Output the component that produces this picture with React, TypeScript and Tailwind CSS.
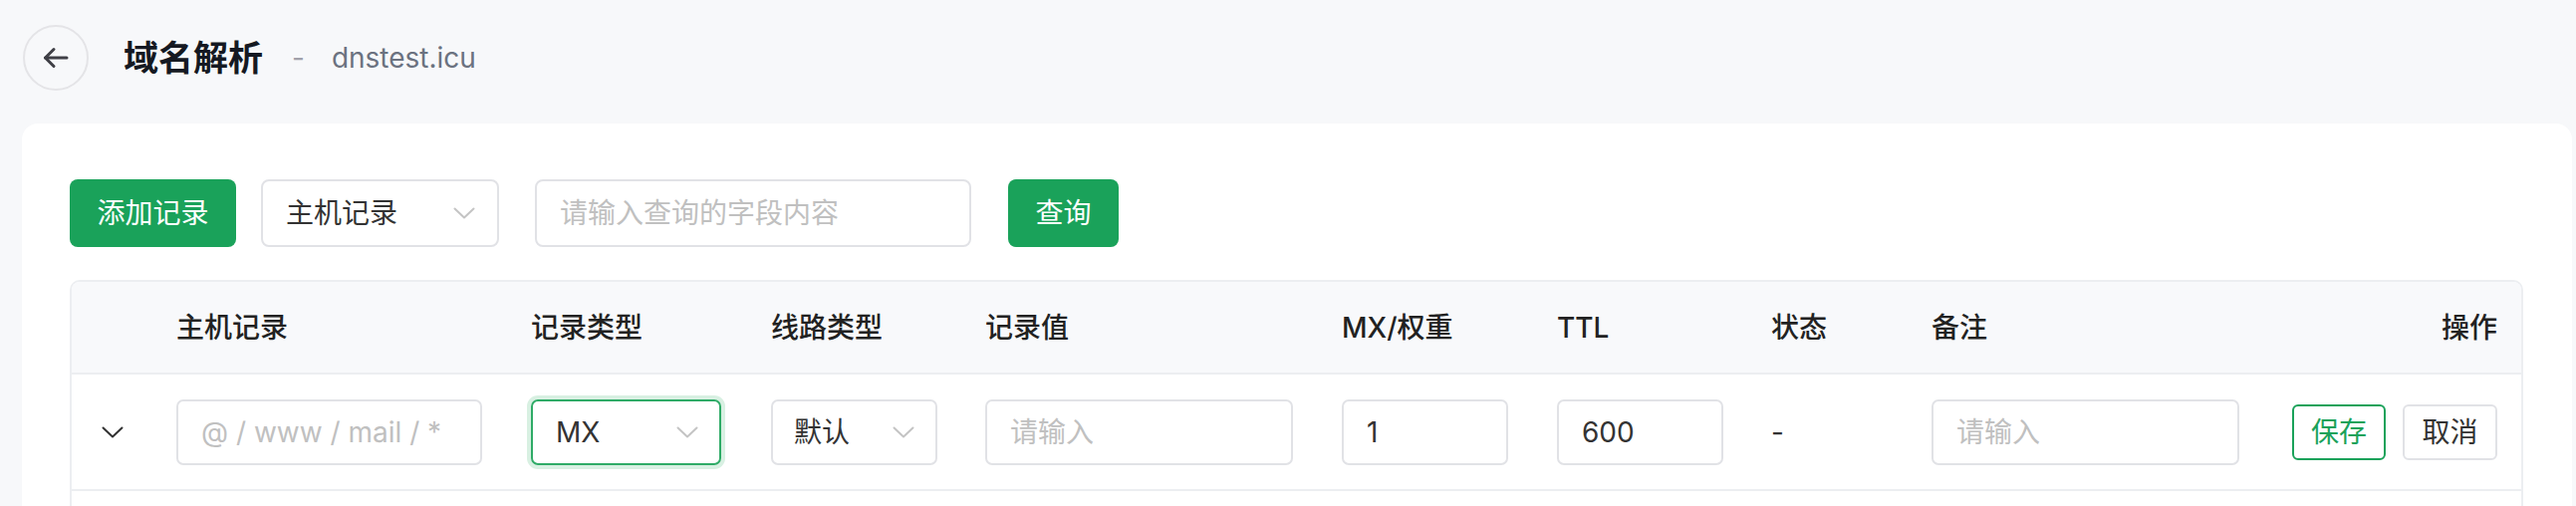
import React from "react";

function Chevron({ className }: { className?: string }) {
  return (
    <svg width="22" height="12" viewBox="0 0 22 12" fill="none" className={className}>
      <polyline points="1.5,1.5 11,10.5 20.5,1.5" stroke="currentColor" strokeWidth="2" strokeLinecap="round" strokeLinejoin="round" />
    </svg>
  );
}

function BackArrow() {
  return (
    <svg width="26" height="22" viewBox="0 0 26 22" fill="none">
      <line x1="2.5" y1="11" x2="24" y2="11" stroke="currentColor" strokeWidth="3" strokeLinecap="round" />
      <polyline points="11,2.5 2.5,11 11,19.5" stroke="currentColor" strokeWidth="3" strokeLinecap="round" strokeLinejoin="round" />
    </svg>
  );
}

const inputBase =
  "h-[66px] rounded-[7px] border-2 border-[#e1e2e6] bg-white pl-[23px] text-[28px] text-[#333] outline-none placeholder:text-[#c0c0c0]";

export default function App() {
  return (
    <div className="min-h-screen bg-[#f7f8fa] font-['Inter','Noto_Sans_CJK_SC',sans-serif] text-[#222]">
      {/* Header */}
      <div className="flex items-center pl-[23px] pt-[25px]">
        <button className="flex h-[66px] w-[66px] items-center justify-center rounded-full border-2 border-[#e4e4e7] text-[#3f3f46]">
          <BackArrow />
        </button>
        <h1 className="ml-[35px] text-[35px] font-semibold leading-none text-[#151922]">域名解析</h1>
        <span className="ml-[29px] text-[28px] leading-none text-[#a1a1aa]">-</span>
        <span className="ml-[27px] text-[28px] leading-none text-[#6b7280]">dnstest.icu</span>
      </div>

      {/* Card */}
      <div className="ml-[22px] mr-[4px] mt-[33px] rounded-[16px] bg-white pl-[48px] pr-[49px] pt-[56px] pb-[40px]">
        {/* Toolbar */}
        <div className="flex items-center">
          <button className="h-[68px] w-[167px] rounded-[8px] bg-[#1aa25a] text-[28px] text-white">添加记录</button>
          <div className="ml-[25px] flex h-[68px] w-[239px] items-center justify-between rounded-[8px] border-2 border-[#e1e2e6] pl-[23px] pr-[22px]">
            <span className="text-[28px] text-[#333]">主机记录</span>
            <Chevron className="text-[#c4c4c4]" />
          </div>
          <input
            className="ml-[36px] h-[68px] w-[438px] rounded-[8px] border-2 border-[#e1e2e6] pl-[23px] text-[28px] text-[#333] outline-none placeholder:text-[#c0c0c0]"
            placeholder="请输入查询的字段内容"
          />
          <button className="ml-[37px] h-[68px] w-[111px] rounded-[8px] bg-[#1aa25a] text-[28px] text-white">查询</button>
        </div>

        {/* Table */}
        <div className="mt-[33px] overflow-hidden rounded-t-[10px] border-2 border-b-0 border-[#eceef1]">
          <div className="grid h-[93px] grid-cols-[105px_356px_241px_215px_358px_216px_215px_161px_362px_1fr] items-center border-b-2 border-[#eceef1] bg-[#f8f9fb] pr-[24px] text-[28px] font-medium text-[#222]">
            <div />
            <div>主机记录</div>
            <div>记录类型</div>
            <div>线路类型</div>
            <div>记录值</div>
            <div>MX/权重</div>
            <div>TTL</div>
            <div>状态</div>
            <div>备注</div>
            <div className="text-right">操作</div>
          </div>

          <div className="grid h-[117px] grid-cols-[105px_356px_241px_215px_358px_216px_215px_161px_362px_1fr] items-center border-b-2 border-[#eceef1] pr-[24px] text-[28px]">
            <div className="pl-[30px] text-[#333]">
              <Chevron />
            </div>
            <div>
              <input className={`${inputBase} w-[307px]`} placeholder="@ / www / mail / *" />
            </div>
            <div>
              <div className="flex h-[66px] w-[191px] items-center justify-between rounded-[7px] border-2 border-[#2fab67] pl-[23px] pr-[21px] shadow-[0_0_0_4px_#d8f0e2]">
                <span className="text-[#333]">MX</span>
                <Chevron className="text-[#c4c4c4]" />
              </div>
            </div>
            <div>
              <div className="flex h-[66px] w-[167px] items-center justify-between rounded-[7px] border-2 border-[#e1e2e6] pl-[21px] pr-[21px]">
                <span className="text-[#333]">默认</span>
                <Chevron className="text-[#c4c4c4]" />
              </div>
            </div>
            <div>
              <input className={`${inputBase} w-[309px]`} placeholder="请输入" />
            </div>
            <div>
              <input className={`${inputBase} w-[167px]`} defaultValue="1" />
            </div>
            <div>
              <input className={`${inputBase} w-[167px]`} defaultValue="600" />
            </div>
            <div className="text-[#333]">-</div>
            <div>
              <input className={`${inputBase} w-[309px]`} placeholder="请输入" />
            </div>
            <div className="flex justify-end gap-[17px]">
              <button className="h-[56px] w-[94px] rounded-[6px] border-2 border-[#1aa25a] text-[28px] text-[#1aa25a]">保存</button>
              <button className="h-[56px] w-[95px] rounded-[6px] border-2 border-[#e1e2e6] text-[28px] text-[#333]">取消</button>
            </div>
          </div>

          <div className="h-[80px]" />
        </div>
      </div>
    </div>
  );
}
